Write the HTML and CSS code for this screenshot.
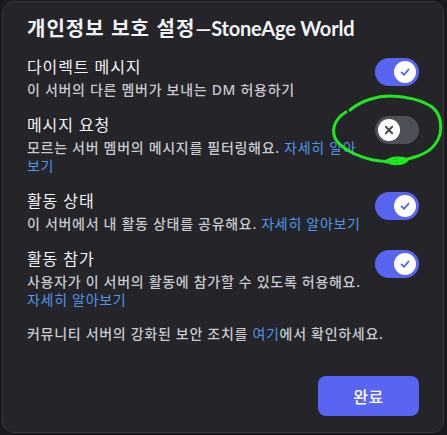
FILE: index.html
```html
<!DOCTYPE html>
<html lang="ko">
<head>
<meta charset="utf-8">
<title>개인정보 보호 설정</title>
<link rel="stylesheet" href="styles.css">
</head>
<body>
<div class="modal">
  <h1 class="title"><span class="title-ko">개인정보 보호 설정</span>—StoneAge World</h1>
  <div class="settings">
    <div class="row">
      <div class="text">
        <div class="label">다이렉트 메시지</div>
        <div class="desc">이 서버의 다른 멤버가 보내는 DM 허용하기</div>
      </div>
      <div class="switch on"><span class="knob"><svg viewBox="0 0 20 20" width="14" height="14"><path d="M5 10.5 L8.5 14 L15 6.5" class="check"/></svg></span></div>
    </div>
    <div class="row">
      <div class="text">
        <div class="label">메시지 요청</div>
        <div class="desc">모르는 서버 멤버의 메시지를 필터링해요. <a class="link" href="#">자세히 알아보기</a></div>
      </div>
      <div class="switch off"><span class="knob"><svg viewBox="0 0 20 20" width="14" height="14"><path d="M5.5 5.5 L14.5 14.5 M14.5 5.5 L5.5 14.5" class="cross"/></svg></span></div>
    </div>
    <div class="row">
      <div class="text">
        <div class="label">활동 상태</div>
        <div class="desc">이 서버에서 내 활동 상태를 공유해요. <a class="link" href="#">자세히 알아보기</a></div>
      </div>
      <div class="switch on"><span class="knob"><svg viewBox="0 0 20 20" width="14" height="14"><path d="M5 10.5 L8.5 14 L15 6.5" class="check"/></svg></span></div>
    </div>
    <div class="row">
      <div class="text">
        <div class="label">활동 참가</div>
        <div class="desc">사용자가 이 서버의 활동에 참가할 수 있도록 허용해요. <a class="link" href="#">자세히 알아보기</a></div>
      </div>
      <div class="switch on"><span class="knob"><svg viewBox="0 0 20 20" width="14" height="14"><path d="M5 10.5 L8.5 14 L15 6.5" class="check"/></svg></span></div>
    </div>
  </div>
  <p class="note">커뮤니티 서버의 강화된 보안 조치를 <a class="link" href="#">여기</a>에서 확인하세요.</p>
  <div class="actions"><button class="done">완료</button></div>
</div>
<svg class="annotation" width="447" height="435" viewBox="0 0 447 435">
  <path class="scribble" d="M350 110 C362 100 378 96 390 96 C405 96 422 100 432 107 C440 113 442 124 440 134 C437 146 428 153 415 157 C402 161 388 163 373 160 C356 156 340 148 335 138 C331 128 336 118 346 112"/>
  <path class="scribble" d="M386 162 C390 157 403 157 407 160 C404 164 393 165 388 162"/>
</svg>
</body>
</html>
```

FILE: styles.css
```css
html, body {
  margin: 0;
}
body {
  background: #1a1a1e;
  padding: 1px 3px 2px 2px;
  font-family: "Noto Sans", "Noto Sans CJK KR", sans-serif;
  position: relative;
}
.modal {
  box-sizing: border-box;
  width: 442px;
  background: #242429;
  border: 1px solid #38383f;
  border-radius: 12px;
  padding: 14px 24px 16px 24px;
}
.title {
  margin: 0;
  font-family: "Lato", "Noto Sans CJK KR", sans-serif;
  font-size: 20px;
  line-height: 24px;
  font-weight: 700;
  letter-spacing: -0.2px;
  color: #f2f3f5;
}
.title-ko {
  font-family: "Noto Sans CJK KR", sans-serif;
  letter-spacing: 1px;
}
.settings {
  margin-top: 17px;
  display: flex;
  flex-direction: column;
  gap: 16px;
}
.row {
  display: flex;
  align-items: flex-start;
  gap: 10px;
}
.text {
  flex: 1;
  min-width: 0;
}
.label {
  font-size: 16px;
  line-height: 20px;
  letter-spacing: 0.9px;
  color: #f2f3f5;
}
.desc {
  margin-top: 4px;
  font-size: 14px;
  line-height: 18px;
  letter-spacing: 0.7px;
  font-weight: 500;
  color: #c8cad0;
}
.link {
  color: #5197ed;
  text-decoration: none;
  font-weight: 400;
}
.switch {
  flex: none;
  box-sizing: border-box;
  width: 44px;
  height: 28px;
  border-radius: 14px;
  margin-top: 1px;
  padding: 0 3px;
  display: flex;
  align-items: center;
}
.switch.on {
  background: #5865f2;
  justify-content: flex-end;
}
.switch.off {
  background: #4e5058;
  justify-content: flex-start;
}
.knob {
  width: 22px;
  height: 22px;
  border-radius: 50%;
  background: #ffffff;
  display: flex;
  align-items: center;
  justify-content: center;
}
.check {
  fill: none;
  stroke: #5865f2;
  stroke-width: 2.6;
  stroke-linecap: round;
  stroke-linejoin: round;
}
.cross {
  fill: none;
  stroke: #4e5058;
  stroke-width: 3;
  stroke-linecap: round;
}
.note {
  margin: 16px 0 0 0;
  font-size: 14px;
  line-height: 18px;
  letter-spacing: 0.7px;
  font-weight: 500;
  color: #c8cad0;
}
.actions {
  margin-top: 33px;
  display: flex;
  justify-content: flex-end;
}
.done {
  width: 101px;
  height: 40px;
  border: none;
  border-radius: 8px;
  background: #5865f2;
  color: #ffffff;
  font-family: "Noto Sans", "Noto Sans CJK KR", sans-serif;
  font-size: 16px;
  font-weight: 500;
  letter-spacing: 0.5px;
  padding: 0;
}
.annotation {
  position: absolute;
  left: 0;
  top: 0;
  pointer-events: none;
}
.scribble {
  fill: none;
  stroke: #1fe81f;
  stroke-width: 3;
  stroke-linecap: round;
  stroke-linejoin: round;
}
```
